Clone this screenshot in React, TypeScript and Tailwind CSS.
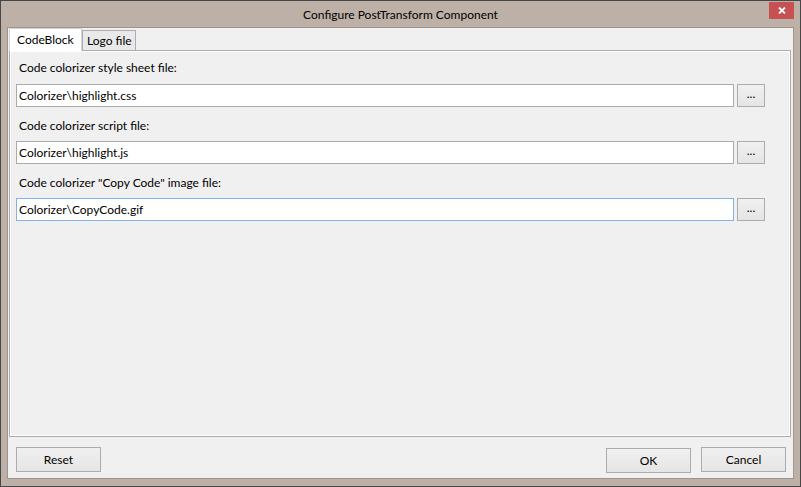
import React from 'react';

const font = "font-['Lato','Liberation_Sans',sans-serif]";

const FileRow: React.FC<{ label: string; value: string; focused?: boolean; first?: boolean }> = ({
  label,
  value,
  focused,
  first,
}) => (
  <div className={first ? 'pt-[8px]' : 'pt-[11px]'}>
    <div className="h-[16px] pl-[3px] text-[12px] leading-[16px] text-black">{label}</div>
    <div className={`flex h-[23px] gap-[3px] ${first ? 'mt-[8px]' : 'mt-[7px]'}`}>
      <div
        className={`flex w-[718px] items-center border bg-white pl-[2px] text-[12px] text-black ${
          focused ? 'border-[#7eb4ea]' : 'border-[#ababab]'
        }`}
      >
        {value}
      </div>
      <button className="flex w-[28px] items-center justify-center border border-[#acacac] bg-gradient-to-b from-[#f0f0f0] to-[#e5e5e5] pb-[3px] text-[12px] text-black">
        ...
      </button>
    </div>
  </div>
);

const DlgButton: React.FC<{ children: React.ReactNode; className?: string }> = ({ children, className }) => (
  <button
    className={`h-[25px] w-[85px] border border-[#acacac] bg-gradient-to-b from-[#f0f0f0] to-[#e5e5e5] text-[12px] text-black ${className ?? ''}`}
  >
    {children}
  </button>
);

const App: React.FC = () => {
  return (
    <div className={`flex h-[487px] w-[801px] flex-col border border-[#474747] bg-[#bdb0a6] ${font}`}>
      {/* title bar */}
      <div className="grid h-[26px] grid-cols-[1fr_auto_1fr] items-start">
        <div />
        <div className="pt-[6px] text-[12px] leading-[16px] text-black">Configure PostTransform Component</div>
        <div className="flex justify-end pr-[6px] pt-[1px]">
          <div className="flex h-[17px] w-[25px] items-center justify-center bg-[#c75050]">
            <svg width="8" height="7" viewBox="0 0 8 7">
              <path d="M1 0.5 L7 6.5 M7 0.5 L1 6.5" stroke="#fff" strokeWidth="1.8" />
            </svg>
          </div>
        </div>
      </div>

      {/* client area */}
      <div className="mx-[6px] mb-[7px] flex flex-1 flex-col border border-[#9e948b] bg-[#f0f0f0]">
        <div className="flex flex-1 flex-col pl-[1px] pr-[2px]">
          {/* tab headers */}
          <div className="relative z-10 flex h-[22px] items-end">
            <div className="-mb-[1px] flex h-[23px] w-[73px] items-center border-x border-t border-[#d4d4d4] bg-white pl-[7px] text-[12px] text-black">
              CodeBlock
            </div>
            <div className="flex h-[20px] w-[54px] items-center border-x border-t border-[#acacac] bg-[#e9e9e9] pl-[4px] text-[12px] text-black">
              Logo file
            </div>
          </div>
          {/* tab page */}
          <div className="h-[387px] border border-[#acacac] bg-white p-[1px]">
            <div className="h-full bg-[#f0f0f0] pl-[5px]">
              <FileRow first label="Code colorizer style sheet file:" value="Colorizer\highlight.css" />
              <FileRow label="Code colorizer script file:" value="Colorizer\highlight.js" />
              <FileRow label='Code colorizer "Copy Code" image file:' value="Colorizer\CopyCode.gif" focused />
            </div>
          </div>
          {/* buttons */}
          <div className="flex items-start pl-[7px] pr-[5px] pt-[10px]">
            <DlgButton>Reset</DlgButton>
            <div className="flex-1" />
            <DlgButton className="mt-[1px]">OK</DlgButton>
            <DlgButton className="ml-[10px]">Cancel</DlgButton>
          </div>
        </div>
      </div>
    </div>
  );
};

export default App;
